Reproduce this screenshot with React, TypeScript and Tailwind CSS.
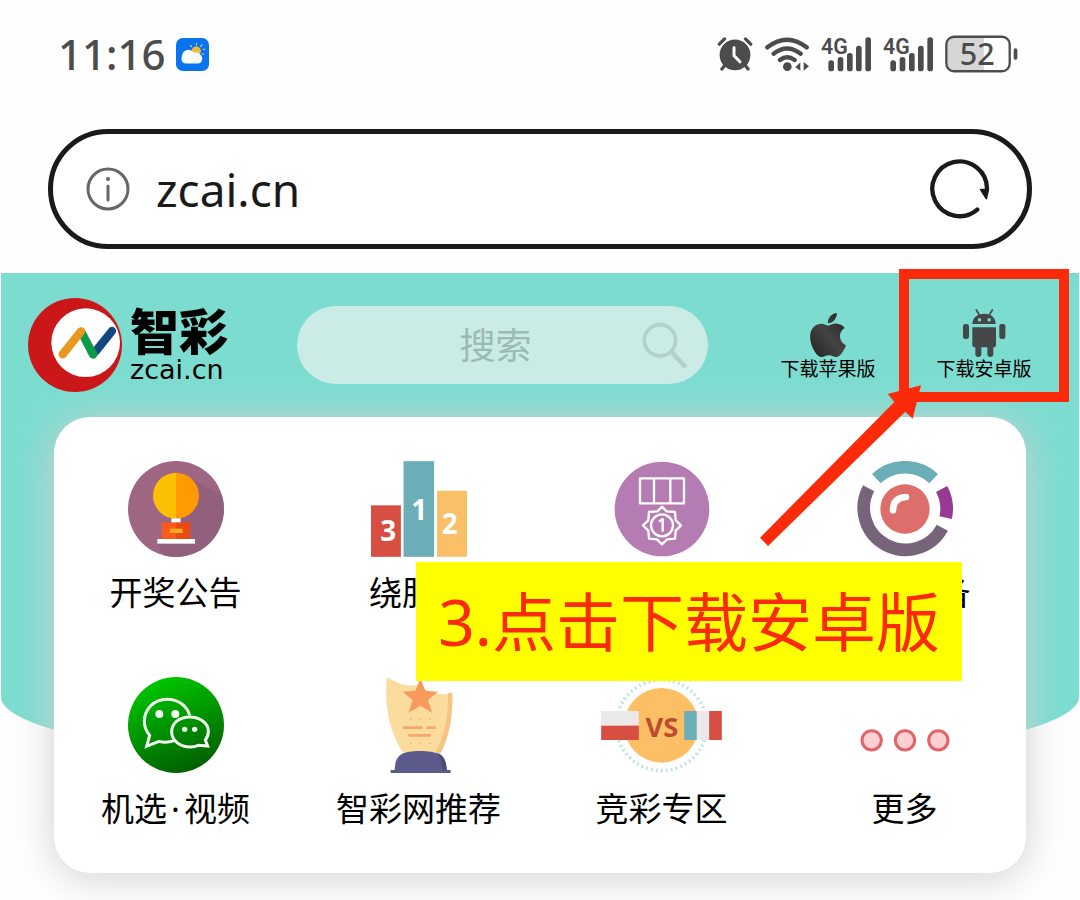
import type { ReactNode } from "react";

const NUM_FONT = "'Noto Sans', sans-serif";

/* ---------- status bar ---------- */

function WeatherIcon() {
  return (
    <svg className="h-[33px] w-[33px]" viewBox="406 51 98 98" aria-hidden="true">
      <rect x="406" y="51" width="98" height="98" rx="20" fill="#0a74ee" />
      <g stroke="#f6dc8c" strokeWidth="3" strokeLinecap="round">
        <path d="M467 67v5M449 73l3 4M483 71l-4 5M491 84l-4 1M488 99l-4-1" />
      </g>
      <circle cx="466" cy="90" r="14" fill="#f5b93a" />
      <rect x="422" y="98" width="62" height="29" rx="14" fill="#f2f7fd" />
      <circle cx="443" cy="105" r="19" fill="#fff" />
      <circle cx="464" cy="109" r="16" fill="#f6faff" />
    </svg>
  );
}

function AlarmIcon() {
  return (
    <svg className="h-9 w-9" viewBox="50 46 110 110" fill="none" stroke="#4c4c4c" strokeLinecap="round" aria-hidden="true">
      <circle cx="105" cy="104" r="47" fill="#4c4c4c" stroke="none" />
      <path d="M57 71l16-16M153 71l-16-16M73 137l-8 10M137 137l8 10" strokeWidth="10" />
      <path d="M102 82v24l18 19" stroke="#fff" strokeWidth="9" strokeLinejoin="round" />
    </svg>
  );
}

function WifiIcon() {
  return (
    <svg className="h-9 w-11" viewBox="195 46 132 108" fill="none" stroke="#4c4c4c" strokeWidth="13" strokeLinecap="round" aria-hidden="true">
      <path d="M202 80Q261 34 320 80M221 99Q261 68 302 99M240 118Q261 102 284 118" />
      <circle cx="262" cy="138" r="13" fill="#4c4c4c" stroke="none" />
      <path d="M286 140l15-15v25zM327 137l-16-13v26z" fill="#4c4c4c" stroke="none" />
    </svg>
  );
}

function SignalIcon() {
  return (
    <svg className="h-9 w-[50px] overflow-visible" viewBox="363 46 150 108" fill="#4c4c4c" aria-label="4G">
      <text x="363" y="99" fontSize="64" fontWeight="600" fontFamily="Roboto, sans-serif">4G</text>
      <rect x="385" y="119" width="17" height="33" rx="8" />
      <rect x="413" y="109" width="17" height="43" rx="8" />
      <rect x="441" y="97" width="17" height="55" rx="8" />
      <rect x="468" y="75" width="17" height="77" rx="8" />
      <rect x="496" y="50" width="17" height="102" rx="8" />
    </svg>
  );
}

function BatteryIcon() {
  return (
    <svg className="h-[38px] w-[73px] overflow-visible" viewBox="735 43 220 114" aria-label="52%">
      <path d="M852 48H762Q739 48 739 71v58q0 23 23 23h90z" fill="#d6d6d6" />
      <rect x="739" y="48" width="191" height="104" rx="23" fill="none" stroke="#4c4c4c" strokeWidth="7" />
      <rect x="942" y="83" width="11" height="34" rx="5" fill="#4c4c4c" />
      <text x="832" y="133" fontSize="92" fontWeight="500" textAnchor="middle" fill="#4c4c4c" fontFamily={NUM_FONT}>52</text>
    </svg>
  );
}

/* ---------- header ---------- */

function LogoMark() {
  return (
    <svg className="h-[94px] w-[94px]" viewBox="85 80 282 282" fill="none" strokeWidth="25" strokeLinecap="round" aria-hidden="true">
      <circle cx="226" cy="221" r="141" fill="#cb1719" />
      <circle cx="258" cy="214" r="103" fill="#fff" />
      <path d="M246 184L280 249" stroke="#0d9a48" />
      <path d="M189 249L244 180" stroke="#e8981f" />
      <path d="M288 240L337 179" stroke="#11497f" />
      <path d="M274 236L281 249" stroke="#0d9a48" />
    </svg>
  );
}

function AppleIcon() {
  return (
    <svg className="h-11 w-11" viewBox="0 0 24 24" aria-hidden="true">
      <defs>
        <linearGradient id="apple" x1="0" y1="1" x2="1" y2="0">
          <stop offset="0" stopColor="#222" />
          <stop offset="0.5" stopColor="#444" />
          <stop offset="1" stopColor="#222" />
        </linearGradient>
      </defs>
      <path
        fill="url(#apple)"
        d="M12.152 6.896c-.948 0-2.415-1.078-3.96-1.04-2.04.027-3.91 1.183-4.961 3.014-2.117 3.675-.546 9.103 1.519 12.09 1.013 1.454 2.208 3.09 3.792 3.039 1.52-.065 2.09-.987 3.935-.987 1.831 0 2.35.987 3.96.948 1.637-.026 2.676-1.48 3.676-2.948 1.156-1.688 1.636-3.325 1.662-3.415-.039-.013-3.182-1.221-3.22-4.857-.026-3.04 2.48-4.494 2.597-4.559-1.429-2.09-3.623-2.324-4.39-2.376-2-.156-3.675 1.09-4.61 1.09zM15.53 3.83c.843-1.012 1.4-2.427 1.245-3.83-1.207.052-2.662.805-3.532 1.818-.78.896-1.454 2.338-1.273 3.714 1.338.104 2.715-.688 3.559-1.701"
      />
    </svg>
  );
}

function AndroidIcon() {
  return (
    <svg className="h-12 w-11" viewBox="605 147 132 144" fill="#434747" aria-hidden="true">
      <path d="M648 150l12 20M696 150l-12 20" stroke="#434747" strokeWidth="5" strokeLinecap="round" />
      <path d="M636 192c0-20 16-31 36-31s34 11 34 31z" />
      <rect x="653" y="175" width="9" height="9" fill="#7fdcd1" />
      <rect x="682" y="175" width="9" height="9" fill="#7fdcd1" />
      <rect x="608" y="192" width="18" height="45" rx="7" />
      <rect x="717" y="192" width="18" height="45" rx="7" />
      <path d="M636 202h71v52q0 8-8 8v20q0 9-9 9t-9-9v-20h-18v20q0 9-9 9t-9-9v-20q-9 0-9-8z" />
    </svg>
  );
}

function SearchIcon() {
  return (
    <svg className="pointer-events-none absolute top-4 right-5 h-[46px] w-[46px]" viewBox="127 97 138 138" fill="none" stroke="#b3d0cc" aria-hidden="true">
      <circle cx="181" cy="152" r="47" strokeWidth="11" />
      <path d="M214 186l44 46" strokeWidth="14" />
    </svg>
  );
}

/* ---------- menu icons ---------- */

function TrophyIcon() {
  return (
    <svg className="h-24 w-24" viewBox="143 64 288 288" aria-hidden="true">
      <circle cx="287" cy="208" r="144" fill="#9f6684" />
      <path d="M336 119L424 165A144 144 0 0 1 250 347L232 312z" fill="#925f7c" />
      <path d="M287 99a69 69 0 0 0 0 138z" fill="#fbc002" />
      <path d="M287 99a69 69 0 0 1 0 138z" fill="#fe9a02" />
      <path d="M244 248h43v50h-43z" fill="#fb5a1c" />
      <path d="M287 248h43v50h-43z" fill="#ea4a13" />
      <rect x="273" y="236" width="28" height="12" fill="#fff" />
      <rect x="268" y="267" width="39" height="13" fill="#ffab1c" />
      <rect x="231" y="298" width="113" height="14" fill="#fff" />
    </svg>
  );
}

function PodiumIcon() {
  return (
    <svg className="h-24 w-24" viewBox="871 64 289 288" aria-hidden="true">
      <rect x="871" y="197" width="90" height="155" fill="#d74e43" />
      <rect x="969" y="64" width="92" height="288" fill="#6baeb8" />
      <rect x="1070" y="153" width="90" height="199" fill="#fbbf67" />
      <g fill="#fff" fontSize="84" fontWeight="700" textAnchor="middle" fontFamily={NUM_FONT}>
        <text x="923" y="304">3</text>
        <text x="1016" y="240">1</text>
        <text x="1108" y="283">2</text>
      </g>
    </svg>
  );
}

// scalloped edge of the medal
const BADGE =
  "245,201 259,215 284,217 286,242 302,257 286,273 284,297 260,299 245,314 230,299 206,297 204,273 188,257 204,242 206,217 231,215";

function MedalIcon() {
  return (
    <svg className="h-24 w-24" viewBox="101 64 288 288" fill="none" stroke="#fff" strokeWidth="7" strokeLinejoin="round" aria-hidden="true">
      <circle cx="245" cy="208" r="142" fill="#b57bb3" stroke="none" />
      <rect x="179" y="116" width="132" height="75" />
      <path d="M221 116v75M270 116v75" />
      <polygon points={BADGE} />
      <circle cx="245" cy="257" r="33" />
      <path d="M236 246l11-8v38" />
    </svg>
  );
}

function CameraIcon() {
  return (
    <svg className="h-24 w-24" viewBox="-144 -144 288 288" fill="none" strokeWidth="38" aria-hidden="true">
      <path d="M-86-91A125 125 0 0 1 86-91" stroke="#6baeb8" />
      <path d="M110-60A125 125 0 0 1 122 26" stroke="#963a96" />
      <path d="M-109-62A125 125 0 1 0 112 56" stroke="#77647a" />
      <circle r="74" fill="#de6e6c" />
      <path d="M-36 4Q-36-34 3-36" stroke="#fff" strokeWidth="20" strokeLinecap="round" />
    </svg>
  );
}

function WechatIcon() {
  return (
    <svg className="h-24 w-24" viewBox="143 51 288 288" fill="none" stroke="#f0ffee" strokeWidth="9" aria-hidden="true">
      <defs>
        <linearGradient id="wechat" x1="0.3" y1="0" x2="0.7" y2="1">
          <stop offset="0" stopColor="#00c800" />
          <stop offset="1" stopColor="#005c00" />
        </linearGradient>
      </defs>
      <circle cx="287" cy="195" r="144" fill="url(#wechat)" stroke="none" />
      <path d="M328 166C320 138 294 118 260 118c-40 0-68 30-68 66 0 18 6 31 16 42l-9 33 37-15c15 4 30 3 46-2" />
      <path d="M328 171c-31 0-54 19-54 44 0 26 24 46 56 46 9 0 17-2 24-5l28 2-7-18c6-7 9-16 9-26 0-25-26-43-56-43z" />
      <g fill="#f0ffee" stroke="none">
        <circle cx="237" cy="162" r="12" />
        <circle cx="285" cy="162" r="12" />
        <circle cx="313" cy="208" r="8" />
        <circle cx="343" cy="208" r="8" />
      </g>
    </svg>
  );
}

function AwardIcon() {
  return (
    <svg className="h-24 w-24" viewBox="870 51 288 288" aria-hidden="true">
      <path d="M918 51c30 20 62 30 96 24 30 26 66 34 100 23 2 72-10 132-34 180H966c-38-58-58-140-48-227z" fill="#fbdc9d" />
      <path d="M1101 100l13-2c2 72-10 132-34 180h-16c26-50 38-106 37-178z" fill="#f6c583" />
      <path d="M1018 55l15 37 38 3-30 25 12 38-35-21-35 21 12-38-30-25 38-3z" fill="#f79a5c" />
      <g stroke="#f5a86c" strokeWidth="8">
        <path d="M966 203h59M1036 203h28M982 226h67" />
        <path d="M987 177h4M1016 177h4M1045 177h4M987 250h4M1016 250h4M1045 250h4" strokeWidth="4" />
      </g>
      <path d="M929 339v-9h12c2-40 14-57 76-57s78 17 80 57h12v9z" fill="#5c5b8b" />
      <path d="M1068 278c22 8 28 24 29 52h-14c0-28-4-40-15-52z" fill="#4c4c7b" />
    </svg>
  );
}

function VersusIcon() {
  return (
    <svg className="h-24 w-[121px]" viewBox="124 51 362 288" aria-hidden="true">
      <circle cx="305" cy="196" r="136" fill="none" stroke="#b9dfe8" strokeWidth="11" strokeDasharray="5 10" />
      <circle cx="305" cy="196" r="112" fill="#fcbf64" />
      <rect x="124" y="153" width="113" height="44" fill="#ebe9ea" />
      <rect x="124" y="197" width="113" height="43" fill="#d74e43" />
      <rect x="373" y="153" width="38" height="87" fill="#6baeb8" />
      <rect x="411" y="153" width="37" height="87" fill="#ebe9ea" />
      <rect x="448" y="153" width="38" height="87" fill="#d74e43" />
      <text x="306" y="232" fontSize="82" fontWeight="700" textAnchor="middle" fill="#be4b30" fontFamily={NUM_FONT}>VS</text>
    </svg>
  );
}

function MoreIcon() {
  return (
    <svg className="h-24 w-24" viewBox="889 51 288 288" fill="#ffd0d2" stroke="#e0646a" strokeWidth="9" aria-hidden="true">
      <circle cx="933" cy="241" r="29" />
      <circle cx="1033" cy="241" r="29" />
      <circle cx="1133" cy="241" r="29" />
    </svg>
  );
}

type MenuItem = { id: string; label: ReactNode; icon: ReactNode };

const MENU: MenuItem[] = [
  { id: "draw", label: "开奖公告", icon: <TrophyIcon /> },
  { id: "podium", label: "绕胆图", icon: <PodiumIcon /> },
  { id: "medal", label: "荣誉榜", icon: <MedalIcon /> },
  { id: "machine", label: "摇奖设备", icon: <CameraIcon /> },
  { id: "video", label: <span>机选<span className="px-1">·</span>视频</span>, icon: <WechatIcon /> },
  { id: "picks", label: "智彩网推荐", icon: <AwardIcon /> },
  { id: "versus", label: "竞彩专区", icon: <VersusIcon /> },
  { id: "more", label: "更多", icon: <MoreIcon /> },
];

export default function App() {
  return (
    <div className="min-h-screen overflow-hidden bg-[#fefefe] font-['Noto_Sans','Noto_Sans_CJK_SC',sans-serif] text-black">
      <div className="flex h-[108px] items-center justify-between pr-[62px] pl-[58px]">
        <div className="flex items-center gap-2.5 text-[#4c4c4c]">
          <span className="text-[42px] leading-none font-medium">11:16</span>
          <WeatherIcon />
        </div>
        <div className="flex items-center gap-3">
          <AlarmIcon />
          <WifiIcon />
          <SignalIcon />
          <SignalIcon />
          <BatteryIcon />
        </div>
      </div>

      {/* address bar */}
      <div className="mx-12 mt-[21px] mb-6 flex h-[120px] items-center rounded-full border-[5px] border-[#1a1a1a] bg-white pr-9 pl-[33px]">
        <svg className="h-11 w-11 shrink-0" viewBox="0 0 44 44" fill="none" stroke="#666" strokeWidth="3" strokeLinecap="round" aria-hidden="true">
          <circle cx="22" cy="22" r="20" />
          <path d="M22 19v14" />
          <circle cx="22" cy="12" r="2" fill="#666" stroke="none" />
        </svg>
        <input
          type="text"
          aria-label="地址"
          defaultValue="zcai.cn"
          className="ml-[26px] min-w-0 flex-1 bg-transparent text-[46px] leading-none text-[#1a1a1a] outline-none"
        />
        <button type="button" aria-label="刷新">
          <svg className="h-[62px] w-[62px]" viewBox="88 114 186 186" fill="none" stroke="#1a1a1a" strokeWidth="13" strokeLinecap="round" aria-hidden="true">
            <path d="M233 269A82 82 0 1 1 262 207" />
            <path d="M243 209h23l-6 27z" fill="#1a1a1a" strokeWidth="5" strokeLinejoin="round" />
          </svg>
        </button>
      </div>

      <main className="relative pb-7">
        <div className="absolute inset-x-px top-0 h-[500px] rounded-b-[50%_76px] bg-[#7cdcd0]" />

        <header className="relative z-10 flex h-36 items-center pr-12 pl-7">
          <a href="#" className="flex w-[200px] items-center gap-2">
            <LogoMark />
            <span className="flex flex-col">
              <span className="text-[49px] leading-[50px] font-black whitespace-nowrap">智彩</span>
              <span className="font-['DejaVu_Sans',sans-serif] text-[27px] leading-7">zcai.cn</span>
            </span>
          </a>
          <div className="relative mr-[72px] ml-[69px] min-w-0 flex-1">
            <input
              type="text"
              aria-label="搜索"
              placeholder="搜索"
              className="h-[78px] w-full rounded-full bg-[#cbebe6] pr-3.5 text-center text-[36px] outline-none placeholder:text-[#9bbab6]"
            />
            <SearchIcon />
          </div>
          <nav className="flex gap-[60px] text-[19px] leading-6">
            <a href="#" className="flex w-24 flex-col items-center justify-end whitespace-nowrap">
              <AppleIcon />
              下载苹果版
            </a>
            <a href="#" className="relative flex w-24 flex-col items-center justify-end whitespace-nowrap">
              <AndroidIcon />
              下载安卓版
              <span className="pointer-events-none absolute -inset-x-[37px] -top-10 -bottom-[21px] border-[10px] border-[#fb2a09]" />
            </a>
          </nav>
        </header>

        <div className="relative mx-[54px] rounded-[36px] bg-white pt-11 pb-10 shadow-[0_4px_40px_#d0d0d0]">
          <ul className="grid grid-cols-4 gap-y-[60px]">
            {MENU.map((item) => (
              <li key={item.id}>
                <a href="#" className="flex flex-col items-center gap-3 text-[33px] leading-12 whitespace-nowrap">
                  {item.icon}
                  {item.label}
                </a>
              </li>
            ))}
          </ul>
          <p className="absolute top-[145px] right-16 bg-[#ffff00] px-[22px] text-[64px] leading-[119px] whitespace-nowrap text-[#fb2a09]">
            3.点击下载安卓版
          </p>
        </div>

        {/* arrow pointing at the Android link */}
        <svg className="pointer-events-none absolute top-28 right-[158px] z-20 h-[162px] w-[162px]" viewBox="0 375 486 486" fill="#fb2a09" aria-hidden="true">
          <path d="M0 833L403 426 383 402 483 376 458 476 436 455 24 858z" />
        </svg>
      </main>
    </div>
  );
}
